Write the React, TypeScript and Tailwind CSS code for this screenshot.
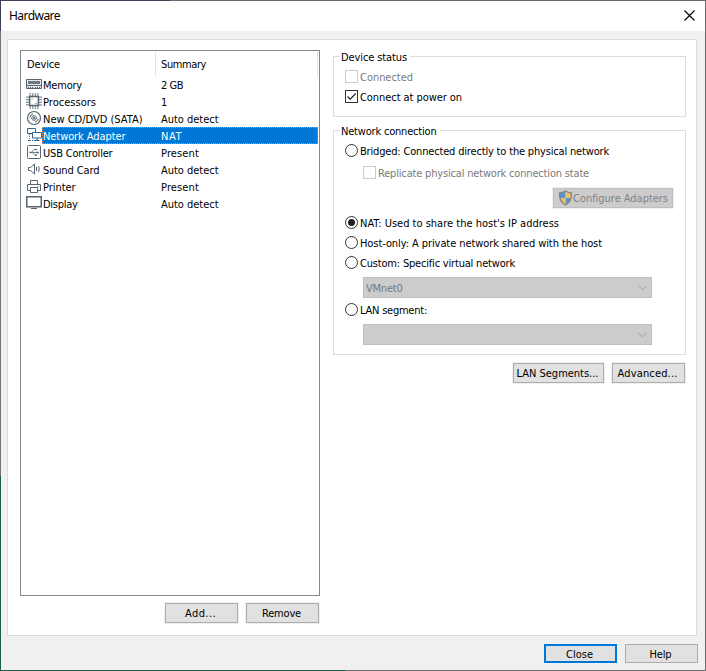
import { useLayoutEffect, useRef, type ReactNode } from "react";
import clsx from "clsx";

/** Text whose tracking is adjusted so that it takes up exactly `w` pixels. */
function T({ children, w, className }: { children: string; w: number; className?: string }) {
  const ref = useRef<HTMLSpanElement>(null);
  useLayoutEffect(() => {
    const el = ref.current;
    if (!el) return;
    el.style.letterSpacing = "0px";
    const natural = el.getBoundingClientRect().width;
    el.style.letterSpacing = `${(w - natural) / children.length}px`;
  }, [children, w]);
  return (
    <span ref={ref} className={clsx("inline-block whitespace-pre", className)}>
      {children}
    </span>
  );
}

const svg = { width: 16, height: 16, viewBox: "0 0 16 16", fill: "none", stroke: "#566470" };

const MemoryIcon = () => (
  <svg {...svg}>
    <path d="M.5 3.500h15v9h-15z" fill="#e6ebee" />
    <path d="M2.500 5.500h3v2h-3zM6.500 5.500h3v2h-3zM10.500 5.500h3v2h-3z" fill="#8b979f" />
    <path d="M1 9.500h14" />
    <path d="M2 11.500h5M9 11.500h5" strokeDasharray="1 1" />
  </svg>
);
const CpuIcon = () => (
  <svg {...svg}>
    <path d="M3.500 1.500h9M3.500 14.500h9" stroke="#84909a" strokeWidth="3" strokeDasharray="1.200 1.400" />
    <path d="M1.500 3.500v9M14.500 3.500v9" stroke="#84909a" strokeWidth="3" strokeDasharray="1.200 1.400" />
    <path d="M3.600 3.600h8.800v8.800H3.600z" fill="#fff" strokeWidth="1.500" />
    <path d="M5.500 6h1M9.500 10.500h1" />
  </svg>
);
const DiscIcon = () => (
  <svg {...svg}>
    <circle cx="8" cy="8" r="6.500" strokeWidth="1.200" />
    <circle cx="8" cy="8" r="2.300" />
    <circle cx="8" cy="8" r=".7" fill="#566470" />
    <path d="M3.800 7.500A4.200 4.200 0 0 1 7 3.900M12.200 8.500A4.200 4.200 0 0 1 9 12.100" />
  </svg>
);
const NetIcon = () => (
  <svg {...svg} stroke="#33658d">
    <path d="M1.500 1.500h8v5h-8z" fill="#fff" />
    <path d="M3.500 7v7M2 13.500h8" strokeDasharray="1 1" />
    <path d="M6.500 5.500h9v5.500h-9z" fill="#fff" />
    <path d="M11 11v2.500M8.500 13.500h5" />
  </svg>
);
const UsbIcon = () => (
  <svg {...svg}>
    <rect x="1.500" y="1.500" width="13" height="13" rx="1" />
    <path d="M4 8.500h9M6 8l2-2.500h2M7 9l2 2.500h1" strokeWidth=".8" />
    <path d="M3.500 8.500h2M9.500 5.500h1.500M9.500 11h1.500M11.500 7.500v2" strokeWidth="1.400" />
  </svg>
);
const SoundIcon = () => (
  <svg {...svg}>
    <path d="M2.500 6.500h2l4-3.500v10l-4-3.500h-2z" />
    <path d="M10.500 6v4M12.500 5q1.600 3 0 6" />
  </svg>
);
const PrinterIcon = () => (
  <svg {...svg}>
    <path d="M4.500 6V2.500h7V6M4 12.500H1.500v-6h13v6H12" />
    <path d="M4.500 9.500h7v5h-7z" />
    <path d="M11.500 8.500h1" />
  </svg>
);
const DisplayIcon = () => (
  <svg {...svg}>
    <path d="M.75 1.750h14.500v10H.75z" strokeWidth="1.500" />
    <path d="M5 13.500h6" />
  </svg>
);

const devices: [() => ReactNode, string, number, string, number][] = [
  [MemoryIcon, "Memory", 39, "2 GB", 22],
  [CpuIcon, "Processors", 53, "1", 6],
  [DiscIcon, "New CD/DVD (SATA)", 99.5, "Auto detect", 57.5],
  [NetIcon, "Network Adapter", 82.5, "NAT", 21],
  [UsbIcon, "USB Controller", 69.5, "Present", 38],
  [SoundIcon, "Sound Card", 56.5, "Auto detect", 57.5],
  [PrinterIcon, "Printer", 32.5, "Present", 38],
  [DisplayIcon, "Display", 34.5, "Auto detect", 57.5],
];

function DeviceList() {
  return (
    <div className="h-[546px] w-[300px] border border-[#828790] bg-white pt-px">
      <div className="flex h-6">
        <div className="flex w-[135px] items-center border-r border-[#e3e3e3] pl-[6px]">
          <T w={33}>Device</T>
        </div>
        <div className="flex w-[162px] items-center border-r border-[#e3e3e3] pl-[5px]">
          <T w={45}>Summary</T>
        </div>
      </div>
      {devices.map(([Icon, name, nw, value, vw], i) => (
        <div key={name} className="flex h-[17px] pl-[5px]">
          <div className="w-4">
            <Icon />
          </div>
          <div
            className={clsx(
              "flex w-[276px] items-center pt-0.5",
              i === 3 && "bg-[#0078d7] text-white outline-1 -outline-offset-1 outline-dotted outline-[#ff8728]",
            )}
          >
            <div className="w-[119px] pl-px">
              <T w={nw}>{name}</T>
            </div>
            <T w={vw}>{value}</T>
          </div>
        </div>
      ))}
    </div>
  );
}

function Button({ label, tw, className }: { label: string; tw: number; className: string }) {
  return (
    <button className={clsx("flex items-center justify-center bg-[#e1e1e1] pr-0.5", className)}>
      <T w={tw}>{label}</T>
    </button>
  );
}

const plain = "border border-[#adadad] shadow-[0_0_0_1px_#f0f0f0] h-5";

function Check({ label, w, checked, disabled }: { label: string; w: number; checked?: boolean; disabled?: boolean }) {
  return (
    <label className={clsx("flex h-[13px] items-start gap-[2px]", disabled && "text-[#7a7a7a]")}>
      <span className={clsx("size-[13px] border bg-white", disabled ? "border-[#cccccc]" : "border-[#333]")}>
        {checked && (
          <svg width="11" height="11" viewBox="0 0 11 11" fill="none" stroke="#222" strokeWidth="1.200">
            <path d="M1.500 5.500l2.700 2.700L9.700 2.500" />
          </svg>
        )}
      </span>
      <T w={w} className="mt-px">{label}</T>
    </label>
  );
}

function Radio({ label, w, checked }: { label: string; w: number; checked?: boolean }) {
  return (
    <label className="flex h-[13px] items-start gap-[2px]">
      <span className="flex size-[13px] items-center justify-center rounded-full border border-[#333] bg-white">
        {checked && <span className="size-[7px] rounded-full bg-[#222]" />}
      </span>
      <T w={w} className="mt-px">{label}</T>
    </label>
  );
}

function Group({ title, w, className, children }: { title: string; w: number; className: string; children: ReactNode }) {
  return (
    <section className={clsx("w-[353px] border border-[#dcdcdc] pl-[11px]", className)}>
      <h2 className="-mt-[6px] -ml-[5px] flex h-[13px] w-fit items-center bg-white pr-[3px] pl-px">
        <T w={w}>{title}</T>
      </h2>
      {children}
    </section>
  );
}

function Combo({ value, className }: { value?: string; className: string }) {
  return (
    <div
      className={clsx(
        "ml-[18px] flex h-[21px] w-[289px] items-center justify-between border border-[#bfbfbf] bg-[#cccccc] pr-1 pl-0.5 text-[#787878]",
        className,
      )}
    >
      {value ? <T w={36.5} className="mt-px">{value}</T> : <span />}
      <svg width="9" height="6" viewBox="0 0 9 6" fill="none" stroke="#9d9d9d">
        <path d="M.5.75l4 4 4-4" />
      </svg>
    </div>
  );
}

const Shield = () => (
  <svg width="15" height="16" viewBox="0 0 15 16">
    <clipPath id="shield">
      <path d="M7.500 1Q10 2.800 13.500 2.800C13.800 8.500 12.500 12.500 7.500 15C2.500 12.500 1.200 8.500 1.500 2.800Q5 2.800 7.500 1z" />
    </clipPath>
    <g clipPath="url(#shield)">
      <path d="M0 0h7.500v8H0zM7.500 8H15v8H7.500z" fill="#5c93ca" />
      <path d="M7.500 0H15v8H7.500zM0 8h7.500v8H0z" fill="#eac36e" />
    </g>
    <path
      d="M7.500 1Q10 2.800 13.500 2.800C13.800 8.500 12.500 12.500 7.500 15C2.500 12.500 1.200 8.500 1.500 2.800Q5 2.800 7.500 1z"
      fill="none"
      stroke="#858585"
      strokeWidth="1.300"
    />
  </svg>
);

export default function App() {
  return (
    <div className="flex h-[671px] w-[706px] bg-[#f0f0f0] font-['DejaVu_Sans_Condensed','DejaVu_Sans',sans-serif] text-[11px] leading-[13px] text-black">
      <div className="flex w-px flex-col">
        <div className="h-[31px] bg-[#3d4056]" />
        <div className="h-[445px] bg-[#77757a]" />
        <div className="grow bg-[#19604a]" />
      </div>
      <div className="flex w-[704px] flex-col">
        <div className="flex h-px">
          <div className="w-[169px] bg-[#3d4056]" />
          <div className="grow bg-[#6b6b6b]" />
        </div>
        <header className="flex h-[30px] items-center justify-between bg-white pr-[10px] pl-2 font-['Noto_Sans',sans-serif] text-xs">
          <T w={51}>Hardware</T>
          <svg width="11" height="11" viewBox="0 0 11 11" fill="none" stroke="#000" strokeWidth="1.100" className="-mt-px">
            <path d="M.5.5l10 10M10.500.5l-10 10" />
          </svg>
        </header>
        <main className="mt-2 ml-[6px] flex h-[597px] w-[690px] border border-[#dcdcdc] bg-white pt-[10px] pl-3">
          <div className="w-[300px]">
            <DeviceList />
            <div className="mt-[7px] flex justify-end gap-2 pr-px">
              <Button label="Add..." tw={31} className={clsx(plain, "w-[73px]")} />
              <Button label="Remove" tw={39} className={clsx(plain, "w-[73px]")} />
            </div>
          </div>
          <div className="ml-[13px] w-[353px] pt-[6px]">
            <Group title="Device status" w={66} className="h-[61px]">
              <div className="mt-[6px] flex flex-col gap-[7px]">
                <Check label="Connected" w={53} disabled />
                <Check label="Connect at power on" w={102} checked />
              </div>
            </Group>
            <Group title="Network connection" w={95.5} className="mt-[13px] h-[225px]">
              <div className="mt-[6px]">
                <Radio label="Bridged: Connected directly to the physical network" w={249} />
              </div>
              <div className="mt-[9px] ml-[18px]">
                <Check label="Replicate physical network connection state" w={211} disabled />
              </div>
              <button className="mt-[9px] ml-[208px] flex h-5 w-[120px] items-center border border-[#bfbfbf] bg-[#cccccc] pl-1 text-[#838383] shadow-[0_0_0_1px_#f0f0f0]">
                <Shield />
                <T w={95}>Configure Adapters</T>
              </button>
              <div className="mt-2 flex flex-col gap-[7px]">
                <Radio label="NAT: Used to share the host's IP address" w={199} checked />
                <Radio label="Host-only: A private network shared with the host" w={242} />
                <Radio label="Custom: Specific virtual network" w={155} />
              </div>
              <Combo value="VMnet0" className="mt-2" />
              <div className="mt-[5px]">
                <Radio label="LAN segment:" w={67} />
              </div>
              <Combo className="mt-2" />
            </Group>
            <div className="mt-2 flex justify-end gap-2 pr-px">
              <Button label="LAN Segments..." tw={82} className={clsx(plain, "w-[91px]")} />
              <Button label="Advanced..." tw={60} className={clsx(plain, "w-[73px]")} />
            </div>
          </div>
        </main>
        <footer className="mt-2 flex grow justify-end gap-2 pr-[7px]">
          <Button label="Close" tw={27} className="h-[19px] w-[73px] border-2 border-[#0078d7] pt-0.5" />
          <Button label="Help" tw={22} className="h-[19px] w-[73px] border border-[#adadad] pt-0.5" />
        </footer>
        <div className="flex h-px">
          <div className="w-[345px] bg-[#19604a]" />
          <div className="grow bg-[#6b6b6b]" />
        </div>
      </div>
      <div className="w-px bg-[#6b6b6b]" />
    </div>
  );
}
